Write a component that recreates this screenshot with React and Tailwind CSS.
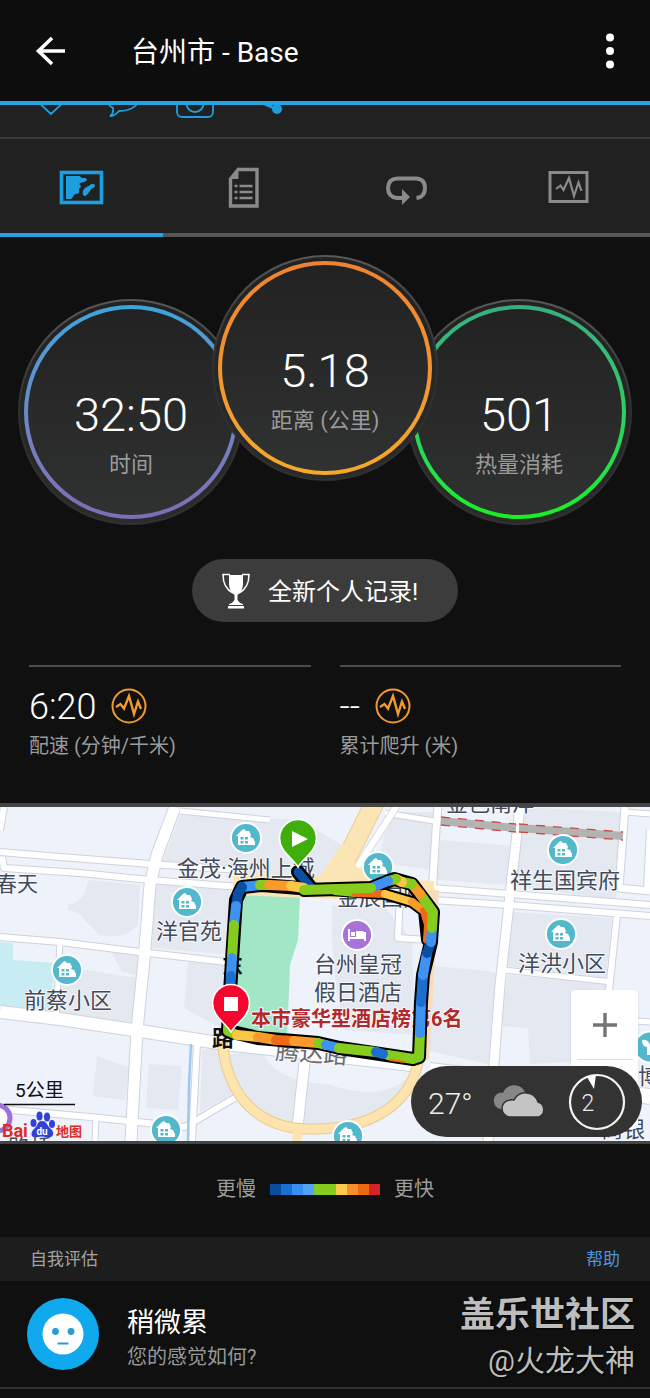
import React from "react";

const C = {
  green: "#85cc1f",
  blue: "#3d92f2",
  mid: "#1b6fce",
  navy: "#0b4fa3",
  yellow: "#fcc545",
  amber: "#f99a2a",
  orange: "#ee6a14",
};

const Pulse = ({ stroke, width }) => (
  <polyline points="6,20 10.500,17 14,21.500 19,9 24,27 28,14.500 31,22" fill="none" stroke={stroke} strokeWidth={width} strokeLinejoin="miter" />
);

function Header() {
  return (
    <header className="flex h-[105px] items-center border-b-4 border-[#23a3e0] bg-[#0d0d0d] px-8">
      <button aria-label="返回" className="h-10 w-10 shrink-0">
        <svg viewBox="0 0 40 40" className="h-10 w-10" fill="none" stroke="#fff" strokeWidth="3.600">
          <path d="M20 7 L6.500 20 L20 33 M6 20 H33" />
        </svg>
      </button>
      <h1 className="ml-[59px] flex-1 pt-1 text-[28px] leading-9 text-white">台州市 - Base</h1>
      <button aria-label="更多" className="-mr-3 h-10 w-10 shrink-0">
        <svg viewBox="0 0 40 40" className="h-10 w-10" fill="#fff">
          <circle cx="20" cy="6.500" r="4" />
          <circle cx="20" cy="20" r="4" />
          <circle cx="20" cy="33.500" r="4" />
        </svg>
      </button>
    </header>
  );
}

const actions = [
  ["赞", <path d="M20 37 L5 23 C-1 13 6 4 13 6 Q18 7 20 12 Q22 7 27 6 C34 4 41 13 35 23 Z" />],
  ["评论", <path d="M7 39.500 Q11 36 10 31 Q3 27 3 18 C3 8 10 3 20 3 S37 9 37 18 S30 34 16 34 Q13 38 7 39.500 Z" />],
  ["相机", <g><rect x="2" y="10" width="36" height="30" rx="5" /><circle cx="20" cy="26.500" r="8.500" /><path d="M12 10 L15 5 H25 L28 10" /></g>],
  ["分享", <g><path d="M30 32 L8 23 L30 8" strokeWidth="3" /><circle cx="30" cy="32" r="5" fill="#1d9fdf" stroke="none" /><circle cx="10" cy="23" r="5" fill="#1d9fdf" stroke="none" /><circle cx="30" cy="8" r="5" fill="#1d9fdf" stroke="none" /></g>],
];

function ActionRow() {
  return (
    <div className="flex h-[34px] gap-8 overflow-hidden border-b-2 border-[#383838] bg-[#212121] pl-[31px]">
      {actions.map(([label, icon]) => (
        <button key={label} aria-label={label} className="-mt-7 h-[42px] w-10 shrink-0">
          <svg viewBox="0 0 40 42" className="h-[42px] w-10" fill="none" stroke="#1d9fdf" strokeWidth="1.800">{icon}</svg>
        </button>
      ))}
    </div>
  );
}

const tabs = [
  ["地图", (
    <g>
      <rect x="3.500" y="6.500" width="40" height="30" fill="none" stroke="#1d9fdf" strokeWidth="3.600" />
      <path d="M8 10 H22 C23 13 26 11 29 13 C29 16 25 16 22 17 C20 19 25 20 22 22 C19 24 24 26 19 28 C16 27 16 31 13 33 H8 Z" fill="#1d9fdf" />
      <path d="M26 30 C23 26 26 21 31 20 C33 17 38 18 37 20 C36 22 33 22 32 25 C30 28 28 30 26 30 Z" fill="#1d9fdf" />
    </g>
  )],
  ["详情", (
    <g stroke="#8a8a8a" fill="none">
      <path d="M18 3.500 H37 V40 H10.500 V12" strokeWidth="3.400" />
      <path d="M9.200 12.500 L18 1.700 V12.500 Z" fill="#8a8a8a" strokeWidth="1" />
      <path d="M14.500 20 h3 M19.500 20 h13 M14.500 26 h3 M19.500 26 h13 M14.500 32 h3 M19.500 32 h13" strokeWidth="2.600" />
    </g>
  )],
  ["计圈", (
    <g>
      <path d="M19 32 H14 Q5 31 5 22 Q5.500 13 14 12.500 H33 Q42 13 42 22 Q42 31 33.500 32" fill="none" stroke="#8a8a8a" strokeWidth="4" />
      <path d="M19 23 L27 31 L19 39 Z" fill="#8a8a8a" />
    </g>
  )],
  ["图表", (
    <g>
      <rect x="5" y="6.500" width="37" height="29" fill="none" stroke="#8a8a8a" strokeWidth="3" />
      <polyline points="11,23 15.500,19.500 18.500,24 24,12 29,30 33.500,16.500 36.500,25" fill="none" stroke="#8a8a8a" strokeWidth="2.200" />
    </g>
  )],
];

function Tabs() {
  return (
    <div role="tablist" className="grid grid-cols-4 bg-[#212121]">
      {tabs.map(([label, icon], i) => (
        <button
          key={label}
          role="tab"
          aria-label={label}
          aria-selected={i === 0}
          className={
            "flex h-[98px] items-center justify-center border-b-4 pt-[2px] " +
            (i === 0 ? "border-[#23a3e0]" : "border-[#565656]")
          }
        >
          <svg viewBox="0 0 47 43" className="h-[43px] w-[47px]">{icon}</svg>
        </button>
      ))}
    </div>
  );
}

function Dial({ value, label, ring, className }) {
  return (
    <div className={"h-[226px] w-[226px] shrink-0 rounded-full bg-linear-to-b from-[#585858] via-[#303030] to-[#303030] p-[2px] " + className}>
      <div className="h-full w-full rounded-full bg-linear-to-b from-[#222222] to-[#2b2b2b] p-[4px]">
        <div className={"h-full w-full rounded-full bg-linear-to-b p-[4px] " + ring}>
          <div className="flex h-full w-full flex-col items-center rounded-full bg-linear-to-b from-[#222222] to-[#303131] pt-[78px]">
            <div className="text-[47px] leading-[56px] font-light text-white">{value}</div>
            <div className="mt-2 text-[22px] leading-7 text-[#9a9a9a]">{label}</div>
          </div>
        </div>
      </div>
    </div>
  );
}

function Stat({ value, label }) {
  return (
    <div className="flex-1 border-t-2 border-[#4d4d4d] pt-[19px]">
      <div className="flex h-10 items-center gap-[14px]">
        <span className="pt-[2px] text-[36px] leading-10 font-light text-white">{value}</span>
        <svg viewBox="0 0 38 38" className="h-[38px] w-[38px]">
          <circle cx="19" cy="19" r="16.500" fill="none" stroke="#f39a2d" strokeWidth="2" />
          <Pulse stroke="#f39a2d" width="2.400" />
        </svg>
      </div>
      <div className="mt-2 text-[20px] leading-6 text-[#9a9a9a]">{label}</div>
    </div>
  );
}

/* ---------- map ---------- */

const blocks = [
  "M180 815 L300 820 L350 850 L340 880 L160 868 Z",
  "M88 880 L140 885 L138 925 Q125 940 100 935 L84 920 Q82 912 68 910 L68 904 Q84 905 88 880 Z",
  "M156 882 L240 890 L232 955 L152 948 Z",
  "M58 975 L85 970 L138 978 L134 1022 L56 1015 Z",
  "M110 950 L140 954 L138 975 L122 972 Z",
  "M188 962 L235 966 L225 1030 L184 1008 Z",
  "M97 1056 L130 1068 L125 1100 L93 1096 Z",
  "M149 1064 L182 1066 L178 1110 L146 1108 Z",
  "M202 1050 L225 1046 L232 1095 L200 1112 Z",
  "M225 1055 Q240 1140 320 1132 Q400 1130 416 1068 Q390 1105 330 1085 Q270 1080 262 1050 Z",
  "M390 812 L436 812 L434 870 L378 862 Z",
  "M440 840 L512 846 L510 885 L437 880 Z",
  "M522 807 L620 812 L616 900 L514 886 Z",
  "M513 912 L612 918 L606 978 L506 966 Z",
  "M435 966 L496 972 L488 1064 L424 1050 Z",
  "M508 975 L610 984 L606 1060 L530 1064 L528 1028 L500 1026 Z",
  "M332 905 L385 908 L412 940 L415 1035 L345 1030 Q330 970 332 905 Z",
];

const roads = [
  ["M4 807 L0 830", 6],
  ["M0 852 L60 857 L150 864 L240 870", 6],
  ["M2 857 L4 868 L80 873 L150 880 L240 887", 6],
  ["M0 937 L60 942 L140 952 L235 963", 6],
  ["M60 943 L56 1018", 5],
  ["M0 1109 L90 1117 L185 1127 L245 1092", 6],
  ["M96 1118 L95 1141", 5],
  ["M197 1043 L192 1141", 6],
  ["M180 811 L270 820", 5],
  ["M385 813 L440 822", 5],
  ["M438 807 L436 830 L432 895", 7],
  ["M400 895 L398 938 L428 940", 6],
  ["M432 888 L510 894 L650 905", 6],
  ["M432 900 L510 905 L650 916", 6],
  ["M625 807 L619 888 L650 891", 7],
  ["M650 830 L647 890", 6],
  ["M625 812 L650 814", 5],
  ["M617 915 L608 1000", 6],
  ["M503 970 L612 982", 5],
  ["M636 1021 L650 1022", 5],
  ["M430 1068 L650 1094", 10],
  ["M520 1080 L650 1100", 8],
  ["M305 1058 L297 1132", 10],
  ["M175 807 L157 855 L150 885 L144 960 L137 1030 L131 1141", 11],
  ["M520 807 L510 895 L500 985 L488 1141", 9],
  ["M0 1012 L60 1019 L140 1031 L225 1044 L420 1066", 12],
];

const route = [
  ["M242 887 L260 885", C.blue],
  ["M260 885 L269 885", C.green],
  ["M269 885 L291 886", C.amber],
  ["M291 886 L304 888", C.yellow],
  ["M242 887 L238 894 L236 906", C.navy],
  ["M236 906 L234 925", C.blue],
  ["M234 925 L232 958", C.green],
  ["M232 958 L231 976", C.blue],
  ["M231 976 L230 992", C.mid],
  ["M230 992 L228 1031 L237 1035", C.green],
  ["M237 1035 L258 1037", C.yellow],
  ["M258 1037 L276 1040", C.amber],
  ["M276 1040 L294 1041", C.orange],
  ["M294 1041 L318 1043", C.amber],
  ["M318 1043 L326 1045", C.green],
  ["M326 1045 L339 1048", C.blue],
  ["M339 1048 L376 1052", C.green],
  ["M388 1055 L413 1059 L419 1057 L420 1033", C.green],
  ["M376 1052 L383 1054", C.mid],
  ["M420 1033 L421 1002", C.blue],
  ["M421 1002 L423 975", C.mid],
  ["M423 975 L427 953", C.blue],
  ["M427 953 L431 942", C.navy],
  ["M431 942 L432 928", C.blue],
  ["M432 928 L433 912 L420 894", C.green],
  ["M420 894 L412 884", C.amber],
  ["M412 884 L402 882", C.green],
  ["M402 882 L396 879", C.yellow],
  ["M396 879 L388 881", C.green],
  ["M388 881 L371 888", C.blue],
  ["M371 888 L304 890", C.green],
];

const innerRoute = [
  ["M335 891 L355 893", C.green],
  ["M355 893 L385 894", C.orange],
  ["M385 894 L412 902", C.yellow],
  ["M412 902 L424 911", C.amber],
  ["M424 911 L428 925 L427 940", C.orange],
];

const outline =
  "M298 872 L312 889 L262 885 L242 887 L236 900 L233 945 L230 992 L228 1031 L258 1038 L318 1043 L340 1048 L380 1054 L413 1059 L419 1057 L421 1002 L423 975 L431 942 L433 912 L412 884 L394 879 L371 888 L304 890";

function HousePin({ x, y }) {
  return (
    <g transform={`translate(${x} ${y})`}>
      <circle r="15" fill="#54b8cc" stroke="#fff" strokeWidth="1.800" />
      <path d="M-10 -2 L-4 -8 L-2 -9 L0 -7 L3 -7 L5 -3 L4 -1 L7 0 L9 4 L9 7 L-8 7 L-8 -2 Z" fill="#fff" />
      <path d="M-5.500 -1 h3 v2.500 h-3 Z M-1 -1 h3 v2.500 h-3 Z M-5.500 3 h3 v2.500 h-3 Z M-1 3 h3 v2.500 h-3 Z" fill="#54b8cc" />
    </g>
  );
}

function Label({ x, y, size = 21, children, ...rest }) {
  return (
    <text x={x} y={y} fontSize={size} fill="#434a58" stroke="#f7f9fd" strokeWidth="2" strokeLinejoin="round" paintOrder="stroke" {...rest}>
      {children}
    </text>
  );
}

function MapPin({ x, y, fill, children }) {
  return (
    <g transform={`translate(${x} ${y})`}>
      <path d="M0 28 C-5 19 -18.500 13 -18.500 -1 A18.500 18.500 0 0 1 18.500 -1 C18.500 13 5 19 0 28 Z" fill={fill} stroke="#fff" strokeWidth="1.600" />
      {children}
    </g>
  );
}

function MapCanvas() {
  return (
    <svg viewBox="0 807 650 334" className="block w-full" role="img" aria-label="路线地图">
      <rect x="0" y="807" width="650" height="334" fill="#eef2fb" />
      {blocks.map((d) => <path key={d} d={d} fill="#e3e8f1" />)}
      <path d="M0 942 L13 943 L13 960 L54 963 L51 1014 L0 1006 Z" fill="#c8ecf4" />
      <path d="M243 890 L300 896 L298 940 L290 965 L287 1040 L228 1032 Z" fill="#a2e7c5" />
      <g fill="none" strokeLinejoin="round">
        {roads.map(([d, w]) => <path key={d} d={d} stroke="#cdd3dd" strokeWidth={w + 2} />)}
        {roads.map(([d, w]) => <path key={d} d={d} stroke="#ffffff" strokeWidth={w} />)}
        <path d="M191 1044 L189 1085 L188 1141" stroke="#9cc9f3" strokeWidth="2.500" />
        <path d="M398 804 L345 886" stroke="#d9dde4" strokeWidth="8" />
        <path d="M398 804 L345 886" stroke="#ffffff" strokeWidth="6" />
        <path d="M376 800 L331 890" stroke="#eccb8f" strokeWidth="20" />
        <path d="M376 800 L331 890" stroke="#fce5b4" strokeWidth="18" />
        <path d="M318 890 L345 850 L352 872 L430 892" stroke="#fce5b4" strokeWidth="12" />
        <path d="M233 884 L434 892" stroke="#fce5b4" strokeWidth="22" />
        <path d="M434 890 L424 1060" stroke="#f8dcbc" strokeWidth="10" />
        <path d="M222 1040 C227 1100 262 1129 310 1129 C370 1130 410 1105 418 1062" stroke="#eccb8f" strokeWidth="11" />
        <path d="M222 1040 C227 1100 262 1129 310 1129 C370 1130 410 1105 418 1062 M297 1129 V1141" stroke="#fde3ad" strokeWidth="9" />
        <path d="M441 821 L516 828 M519 828 L623 836" stroke="#b3b3b3" strokeWidth="8" />
        <path d="M441 817 L516 824 M519 824 L623 832 M441 825 L516 832 M519 832 L623 840" stroke="#cf4a45" strokeWidth="1.300" strokeDasharray="9 8" />
      </g>

      {[[246, 838], [187, 902], [67, 970], [166, 1130], [348, 1136], [378, 867], [563, 850], [561, 934]].map(([x, y]) => (
        <HousePin key={x} x={x} y={y} />
      ))}
      <circle cx="-3" cy="1118" r="13" fill="#fff" stroke="#a071dc" strokeWidth="5" />
      <g transform="translate(357 935)">
        <circle r="15" fill="#a873d8" stroke="#fff" strokeWidth="1.800" />
        <path d="M-8 -6 V6 M-8 3 H8 M8 6 V-2 H-1" fill="none" stroke="#fff" strokeWidth="2" />
        <path d="M-1 -4 H6 L8 -1 V3 H-1 Z M-6 -3 h4 v4 h-4 Z" fill="#fff" />
      </g>
      <g transform="translate(650 1047)">
        <circle r="15.500" fill="#54b8cc" stroke="#fff" strokeWidth="1.800" />
        <path d="M-8 -7 Q-2 -8 0 -2 V8 H-3 V0 Q-8 0 -8 -7 Z" fill="#fff" />
      </g>

      <Label x="-4" y="891">春天</Label>
      <Label x="177" y="876" size={22}>金茂·海州上城</Label>
      <Label x="156" y="939" size={22}>洋官苑</Label>
      <Label x="24" y="1008" size={22}>前蔡小区</Label>
      <Label x="337" y="905" size={22}>金辰国际</Label>
      <Label x="314" y="972" size={22}>台州皇冠</Label>
      <Label x="314" y="1000" size={22}>假日酒店</Label>
      <Label x="446" y="811" size={22}>金色南洋</Label>
      <Label x="510" y="888" size={22}>祥生国宾府</Label>
      <Label x="518" y="971" size={22}>洋洪小区</Label>
      <Label x="8" y="1155" size={22}>路桥</Label>
      <Label x="638" y="1084" size={22}>博</Label>
      <Label x="601" y="1137" size={22}>商银</Label>
      <Label x="275" y="1059" size={24} fill="#6a6a6c" transform="rotate(4 275 1059)">腾达路</Label>
      <text x="222" y="973" fontSize="21" fontWeight="700" fill="#111">东</text>
      <text x="212" y="1046" fontSize="22" fontWeight="700" fill="#111">路</text>
      <Label x="251" y="1026" size={20} fill="#b3282b" fontWeight="700">本市豪华型酒店榜第6名</Label>

      <g fill="none" strokeLinejoin="round" strokeLinecap="round">
        <path d="M330 890 L385 894 L412 902 L424 911 L427 940" stroke="#000" strokeWidth="12" />
        <path d={outline} stroke="#000" strokeWidth="14" />
        <path d="M298 872 L312 889" stroke={C.navy} strokeWidth="9" />
        {innerRoute.map(([d, c]) => <path key={d} d={d} stroke={c} strokeWidth="8" />)}
        {route.map(([d, c]) => <path key={d} d={d} stroke={c} strokeWidth="10" />)}
        <path d="M390 1060 L405 1062" stroke={C.orange} strokeWidth="2" />
      </g>

      <MapPin x={298} y={839} fill="#3fae0a">
        <path d="M-6 -8 L10 0 L-6 8 Z" fill="#fff" />
      </MapPin>
      <MapPin x={231} y={1004} fill="#f4062e">
        <rect x="-7" y="-7" width="14" height="14" fill="#fff" />
      </MapPin>

      <text x="15" y="1097" fontSize="19" fill="#111">5公里</text>
      <path d="M4 1104.500 H75" stroke="#111" strokeWidth="1.500" />

      <g>
        <text x="2" y="1137" fontSize="18" fontWeight="700" fill="#df2b27">Bai</text>
        <g fill="#3340d6">
          <ellipse cx="33.500" cy="1123" rx="3" ry="4" />
          <ellipse cx="39.500" cy="1116" rx="3" ry="4.500" />
          <ellipse cx="47" cy="1117" rx="3" ry="4.500" />
          <ellipse cx="52" cy="1124" rx="3" ry="4" />
          <path d="M42 1121 C47 1121 47 1126 51 1129 C56 1134 52 1139 46 1137 Q42 1136 38 1137 C32 1139 29 1134 34 1129 C38 1126 37 1121 42 1121 Z" />
        </g>
        <text x="42" y="1135" fontSize="10" fontWeight="700" textAnchor="middle" fill="#fff">du</text>
        <text x="56" y="1136" fontSize="13" fontWeight="700" fill="#df2b27">地图</text>
      </g>
    </svg>
  );
}

function RouteMap() {
  return (
    <section className="relative overflow-hidden border-t-4 border-b-[3px] border-[#444444]">
      <MapCanvas />
      <div className="absolute right-3 bottom-3 flex w-[67px] flex-col items-center rounded-sm bg-white shadow">
        <button aria-label="放大" className="flex h-[69px] w-full items-center justify-center">
          <svg viewBox="0 0 26 26" className="h-[26px] w-[26px]" stroke="#747474" strokeWidth="3.400">
            <path d="M13 1 V25 M1 13 H25" />
          </svg>
        </button>
        <div className="h-px w-14 bg-[#dedede]" />
        <button aria-label="缩小" className="flex h-[69px] w-full items-center justify-center">
          <svg viewBox="0 0 26 26" className="h-[26px] w-[26px]" stroke="#747474" strokeWidth="3.400">
            <path d="M1 13 H25" />
          </svg>
        </button>
      </div>
      <div className="absolute right-2 bottom-1 flex h-[71px] w-[231px] items-center justify-between rounded-full bg-[#333333] pr-4 pl-[17px] text-[#eeeeee]">
        <span className="pt-1 text-[30px] leading-9 font-light">27°</span>
        <svg viewBox="0 0 58 36" className="h-9 w-[58px]">
          <path d="M9 25 A8.500 8.500 0 0 1 8 9 Q10 8 12 9 A12 12 0 0 1 34 8 L30 25 Z" fill="#878787" />
          <path d="M20 33 A8.500 8.500 0 0 1 19 16 Q21 15.500 23 16 A13 13 0 0 1 47 18 A8 8 0 0 1 48 33 Z" fill="#c4c4c4" stroke="#333" strokeWidth="1.500" />
        </svg>
        <div className="relative flex h-[58px] w-[58px] items-center justify-center">
          <svg viewBox="0 0 58 58" className="absolute inset-0 h-full w-full">
            <circle cx="29" cy="29" r="27" fill="none" stroke="#f2f2f2" strokeWidth="2.200" />
            <path d="M19 4 L26 16 L28 2 Z" fill="#fff" />
          </svg>
          <span className="pt-1 pr-[18px] text-[23px] leading-7 font-light">2</span>
        </div>
      </div>
    </section>
  );
}

const scale = [
  "bg-[#0a4da0]", "bg-[#1a70d0]", "bg-[#3690f4]", "bg-[#52a3f8]", "bg-[#84cc20]",
  "bg-[#84cc20]", "bg-[#fccb4c]", "bg-[#f98f2a]", "bg-[#ea6a12]", "bg-[#d32424]",
];

export default function App() {
  return (
    <div className="min-h-screen bg-[#101010] font-['Roboto','Noto_Sans_CJK_SC',sans-serif]">
      <Header />
      <ActionRow />
      <Tabs />
      <main>
        <section className="flex justify-center pt-[18px]">
          <Dial value="32:50" label="时间" ring="from-[#3aa5dc] to-[#7e6db4]" className="mt-11" />
          <Dial value="5.18" label="距离 (公里)" ring="from-[#ee8232] to-[#f5a82c]" className="relative z-10 -mx-8" />
          <Dial value="501" label="热量消耗" ring="from-[#3aad80] to-[#17f01c]" className="mt-11" />
        </section>

        <div className="mt-[34px] flex justify-center">
          <button className="flex h-[63px] items-center rounded-full bg-[#3c3c3c] pr-10 pl-[30px] text-[24px] leading-8 text-white">
            <svg viewBox="0 0 28 36" className="mr-[18px] h-9 w-7">
              <path d="M7 2 H21 V12 Q20 19 15.500 22 V27 Q17 30 21 31 V32 H7 V31 Q11 30 12.500 27 V22 Q8 19 7 12 Z M6 33 H22 V35.500 H6 Z" fill="#fff" />
              <path d="M8 1.500 H1 Q1 15 11 20 M20 1.500 H27 Q27 15 17 20" fill="none" stroke="#fff" strokeWidth="1.500" />
            </svg>
            <span className="pt-[2px]">全新个人记录!</span>
          </button>
        </div>

        <section className="mt-[43px] flex gap-[29px] px-[29px] pb-[45px]">
          <Stat value="6:20" label="配速 (分钟/千米)" />
          <Stat value="--" label="累计爬升 (米)" />
        </section>

        <RouteMap />

        <div className="flex items-center justify-center gap-[14px] pt-[30px] pb-[33px] text-[20px] leading-[30px] text-[#9d9d9d]">
          <span>更慢</span>
          <div className="flex h-[11px] w-[110px]">
            {scale.map((c, i) => <span key={i} className={"flex-1 " + c} />)}
          </div>
          <span>更快</span>
        </div>

        <div className="flex h-11 items-center justify-between bg-[#1d1d1d] px-[30px] text-[17px] leading-6">
          <h2 className="text-[#a3a3a3]">自我评估</h2>
          <a href="#help" className="text-[#4d94dc]">帮助</a>
        </div>

        <section className="flex h-[108px] items-center border-b-2 border-[#333333] pr-[15px] pl-[27px]">
          <svg viewBox="0 0 72 72" className="h-[72px] w-[72px] shrink-0">
            <circle cx="36" cy="36" r="36" fill="#11a9ed" />
            <circle cx="36" cy="36" r="20.500" fill="#fff" />
            <circle cx="28.500" cy="33.500" r="3.400" fill="#2a9cd4" />
            <circle cx="44" cy="33.500" r="3.400" fill="#2a9cd4" />
            <path d="M30.500 45.500 H41.500" stroke="#2a9cd4" strokeWidth="2" />
          </svg>
          <div className="ml-7 flex-1 pt-[10px]">
            <div className="text-[27px] leading-9 text-white">稍微累</div>
            <div className="text-[20px] leading-8 text-[#989898]">您的感觉如何?</div>
          </div>
          <div className="pt-2 text-right text-[#bdbdbd] text-shadow-[1px_1px_2px_#000]">
            <div className="text-[35px] leading-[46px] font-bold">盖乐世社区</div>
            <div className="text-[30px] leading-[44px]">@火龙大神</div>
          </div>
        </section>
      </main>
    </div>
  );
}
